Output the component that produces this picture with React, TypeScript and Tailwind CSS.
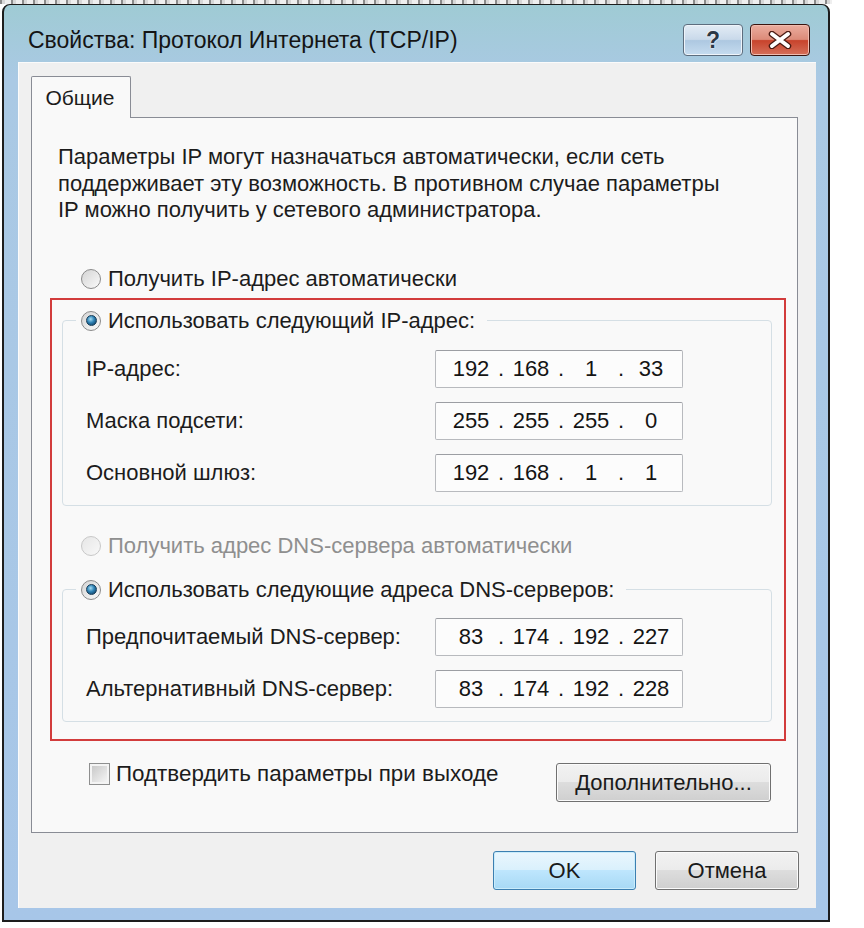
import React from "react";

type Octets = [string, string, string, string];

function Radio({ checked = false, disabled = false }: { checked?: boolean; disabled?: boolean }) {
  return (
    <span
      className={`flex h-[20px] w-[20px] shrink-0 items-center justify-center rounded-full border ${
        disabled
          ? "border-[#c8c8c8] bg-[linear-gradient(135deg,#e6e6e6,#f8f8f8)]"
          : "border-[#8a8a8a] bg-[linear-gradient(135deg,#d4d4d4,#fafafa)]"
      }`}
    >
      {checked && (
        <span className="h-[11px] w-[11px] rounded-full border border-[#163c58] bg-[radial-gradient(circle_at_40%_35%,#a6ddf4_0%,#2c80b3_45%,#0c3151_100%)]" />
      )}
    </span>
  );
}

function IpField({ value }: { value: Octets }) {
  return (
    <div className="flex h-[38px] w-[248px] items-center rounded-[2px] border border-[#b8babe] border-t-[#9c9ea3] bg-[#fcfcfc] pl-[10px] text-[22px] text-[#141414]">
      {value.map((o, i) => (
        <React.Fragment key={i}>
          {i > 0 && <span className="w-[10px] text-center">.</span>}
          <span className="w-[50px] text-center">{o}</span>
        </React.Fragment>
      ))}
    </div>
  );
}

function FieldRow({ label, value }: { label: string; value: Octets }) {
  return (
    <div className="flex items-center">
      <span className="w-[349px] whitespace-nowrap">{label}</span>
      <IpField value={value} />
    </div>
  );
}

function Group({ legend, pt, children }: { legend: string; pt: string; children: React.ReactNode }) {
  return (
    <fieldset className={`ml-[10px] mr-[12px] rounded-[4px] border border-[#d5dfe5] pb-[13px] pl-[13px] ${pt}`}>
      <legend className="pl-[5px] pr-[12px]">
        <span className="flex h-[26px] items-center gap-[7px] whitespace-nowrap">
          <Radio checked />
          {legend}
        </span>
      </legend>
      <div className="flex flex-col gap-[14px] pl-[10px]">{children}</div>
    </fieldset>
  );
}

function WinButton({ children, primary = false, className = "" }: { children: React.ReactNode; primary?: boolean; className?: string }) {
  return (
    <button
      className={`flex h-[39px] items-center justify-center rounded-[3px] border text-[22px] text-[#1a1a1a] ${
        primary
          ? "border-[#3c7fb1] bg-[linear-gradient(#eaf6fd_0%,#d9f0fc_50%,#bee6fd_50%,#a7d9f5_100%)] shadow-[inset_0_0_0_1px_#c9ecfb]"
          : "border-[#707070] bg-[linear-gradient(#f2f2f2_0%,#ebebeb_50%,#dddddd_50%,#cfcfcf_100%)] shadow-[inset_0_0_0_1px_#fbfbfb]"
      } ${className}`}
    >
      {children}
    </button>
  );
}

export default function App() {
  return (
    <div className="h-[928px] w-[864px] overflow-hidden bg-white font-['Liberation_Sans',Arial,sans-serif] text-[22px] text-[#1c1c1c]">
      {/* strip of the window behind */}
      <div className="h-[4px] w-[832px] bg-[repeating-linear-gradient(90deg,#3c3c3c_0px,#3c3c3c_2px,#bdbdbd_2px,#bdbdbd_5px,#e4e4e4_5px,#e4e4e4_11px)] opacity-60" />

      {/* window frame */}
      <div className="ml-[2px] h-[918px] w-[828px] rounded-t-[8px] border-2 border-t border-[#1d1d1d] bg-[linear-gradient(180deg,#9fcbd4_0%,#aac9e4_8%,#a7c6e8_100%)]">
        {/* title bar */}
        <div className="flex h-[57px] items-start justify-between pl-[24px] pr-[18px] pt-[19px]">
          <div className="flex h-[32px] items-center whitespace-nowrap text-[23px] text-[#141414]">
            Свойства: Протокол Интернета (TCP/IP)
          </div>
          <div className="flex gap-[7px]">
            <div className="flex h-[32px] w-[60px] items-center justify-center rounded-[4px] border border-[#5d6d7e] bg-[linear-gradient(#e3ecf5_0%,#c9d9ea_48%,#adc8e1_52%,#c6dcef_100%)] shadow-[inset_0_0_0_1px_#eef4fa]">
              <span className="text-[23px] font-bold leading-none text-[#2b3846] [text-shadow:0_0_2px_#ffffff,0_0_1px_#ffffff]">?</span>
            </div>
            <div className="flex h-[32px] w-[60px] items-center justify-center rounded-[4px] border border-[#3a1510] bg-[linear-gradient(#ebad9f_0%,#dc8b79_48%,#c8432c_52%,#d5705a_100%)] shadow-[inset_0_0_0_1px_#f0bcb0]">
              <svg width="26" height="18" viewBox="0 0 26 18">
                <path d="M5 3 L21 15 M21 3 L5 15" stroke="#4a1a12" strokeWidth="6.5" strokeLinecap="round" />
                <path d="M5 3 L21 15 M21 3 L5 15" stroke="#ffffff" strokeWidth="4" strokeLinecap="round" />
              </svg>
            </div>
          </div>
        </div>

        {/* client area */}
        <div className="ml-[14px] h-[846px] w-[798px] bg-[#f0f0f0] pl-[13px] pt-[14px] shadow-[inset_1px_1px_0_#fbfbfb]">
          {/* tab */}
          <div className="relative z-10 -mb-px flex h-[42px] w-[100px] items-center justify-center rounded-t-[2px] border border-b-0 border-[#898c95] bg-[#f9f9f9] pr-[2px] text-[21px]">
            Общие
          </div>

          {/* tab panel */}
          <div className="h-[716px] w-[767px] border border-[#898c95] bg-[#f9f9f9] pt-[26px]">
            <div className="whitespace-nowrap pl-[26px] leading-[26.5px]">
              <div>Параметры IP могут назначаться автоматически, если сеть</div>
              <div>поддерживает эту возможность. В противном случае параметры</div>
              <div>IP можно получить у сетевого администратора.</div>
            </div>

            <div className="mt-[42px] flex h-[26px] items-center gap-[7px] pl-[49px]">
              <Radio />
              <span>Получить IP-адрес автоматически</span>
            </div>

            {/* highlighted block */}
            <div className="ml-[18px] mt-[6px] w-[736px] border-2 border-[#d23c3c] pb-[17px] pt-[8px]">
              <Group legend="Использовать следующий IP-адрес:" pt="pt-[16px]">
                <FieldRow label="IP-адрес:" value={["192", "168", "1", "33"]} />
                <FieldRow label="Маска подсети:" value={["255", "255", "255", "0"]} />
                <FieldRow label="Основной шлюз:" value={["192", "168", "1", "1"]} />
              </Group>

              <div className="mt-[27px] flex h-[26px] items-center gap-[7px] pl-[29px] text-[#8f8f8f]">
                <Radio disabled />
                <span>Получить адрес DNS-сервера автоматически</span>
              </div>

              <div className="mt-[18px]">
                <Group legend="Использовать следующие адреса DNS-серверов:" pt="pt-[15px]">
                  <FieldRow label="Предпочитаемый DNS-сервер:" value={["83", "174", "192", "227"]} />
                  <FieldRow label="Альтернативный DNS-сервер:" value={["83", "174", "192", "228"]} />
                </Group>
              </div>
            </div>

            <div className="mt-[21px] flex items-start justify-between pl-[57px] pr-[26px]">
              <div className="flex h-[24px] items-center gap-[6px]">
                <span className="flex h-[22px] w-[21px] items-center justify-center border border-[#8e8f8f] bg-[#f4f4f4]">
                  <span className="h-[16px] w-[15px] bg-[linear-gradient(135deg,#c9c9c9,#f4f4f4)]" />
                </span>
                <span className="whitespace-nowrap text-[22.4px]">Подтвердить параметры при выходе</span>
              </div>
              <WinButton className="mt-[1px] h-[38px] w-[215px]">Дополнительно...</WinButton>
            </div>
          </div>

          {/* dialog buttons */}
          <div className="mt-[18px] flex justify-end gap-[19px] pr-[17px]">
            <WinButton primary className="w-[143px]">
              OK
            </WinButton>
            <WinButton className="w-[144px]">Отмена</WinButton>
          </div>
        </div>
      </div>
    </div>
  );
}
